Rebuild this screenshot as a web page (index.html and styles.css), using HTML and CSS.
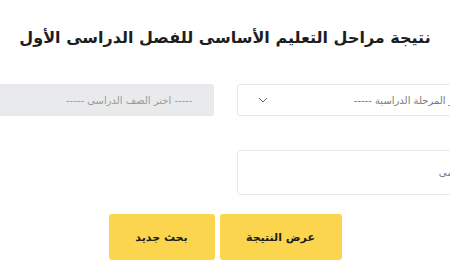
FILE: index.html
```
<!DOCTYPE html>
<html lang="ar" dir="rtl">
<head>
<meta charset="utf-8">
<link rel="stylesheet" href="styles.css">
</head>
<body>
<div class="page">
  <h1 class="title">نتيجة مراحل التعليم الأساسى للفصل الدراسى الأول</h1>
  <div class="form">
    <div class="field select">
      <span class="ph">----- اختر المرحلة الدراسية -----</span>
      <svg class="chev" width="10" height="6" viewBox="0 0 10 6"><path d="M1 1 L5 5 L9 1" fill="none" stroke="#666" stroke-width="1"/></svg>
    </div>
    <div class="field select disabled">
      <span class="ph">----- اختر الصف الدراسى -----</span>
    </div>
    <div class="field input">
      <span class="ph">الرقم القومى</span>
    </div>
    <div></div>
  </div>
  <div class="actions">
    <button class="btn">عرض النتيجة</button>
    <button class="btn narrow">بحث جديد</button>
  </div>
</div>
</body>
</html>
```
FILE: styles.css
```
html, body {
  margin: 0;
  padding: 0;
  background: #fff;
  overflow: hidden;
}
body {
  width: 450px;
  height: 280px;
  font-family: "DejaVu Sans", sans-serif;
}
.page {
  display: flex;
  flex-direction: column;
  align-items: center;
  padding-top: 24px;
}
.title {
  margin: 0;
  font-size: 16px;
  font-weight: bold;
  color: #1e1e1e;
  line-height: 28px;
  white-space: nowrap;
}
.form {
  margin-top: 32px;
  width: 567px;
  flex-shrink: 0;
  display: grid;
  grid-template-columns: 272px 272px;
  column-gap: 23px;
  row-gap: 34px;
}
.field {
  box-sizing: border-box;
  border: 1px solid #e8e8ea;
  border-radius: 3px;
  background: #fff;
  display: flex;
  align-items: center;
  padding: 0 20px;
  font-size: 10px;
  color: #7a7a7a;
  white-space: nowrap;
}
.select {
  height: 32px;
  justify-content: space-between;
}
.disabled {
  background: #e9eaec;
  color: #9a9a9a;
}
.input {
  height: 45px;
  padding-right: 13px;
}
.actions {
  margin-top: 19px;
  display: flex;
  gap: 5px;
}
.btn {
  font-family: "DejaVu Sans", sans-serif;
  width: 122px;
  height: 46px;
  border: none;
  border-radius: 3px;
  background: #fcd54e;
  color: #1e1e1e;
  font-size: 11px;
  font-weight: bold;
}
.narrow {
  width: 106px;
}
```
